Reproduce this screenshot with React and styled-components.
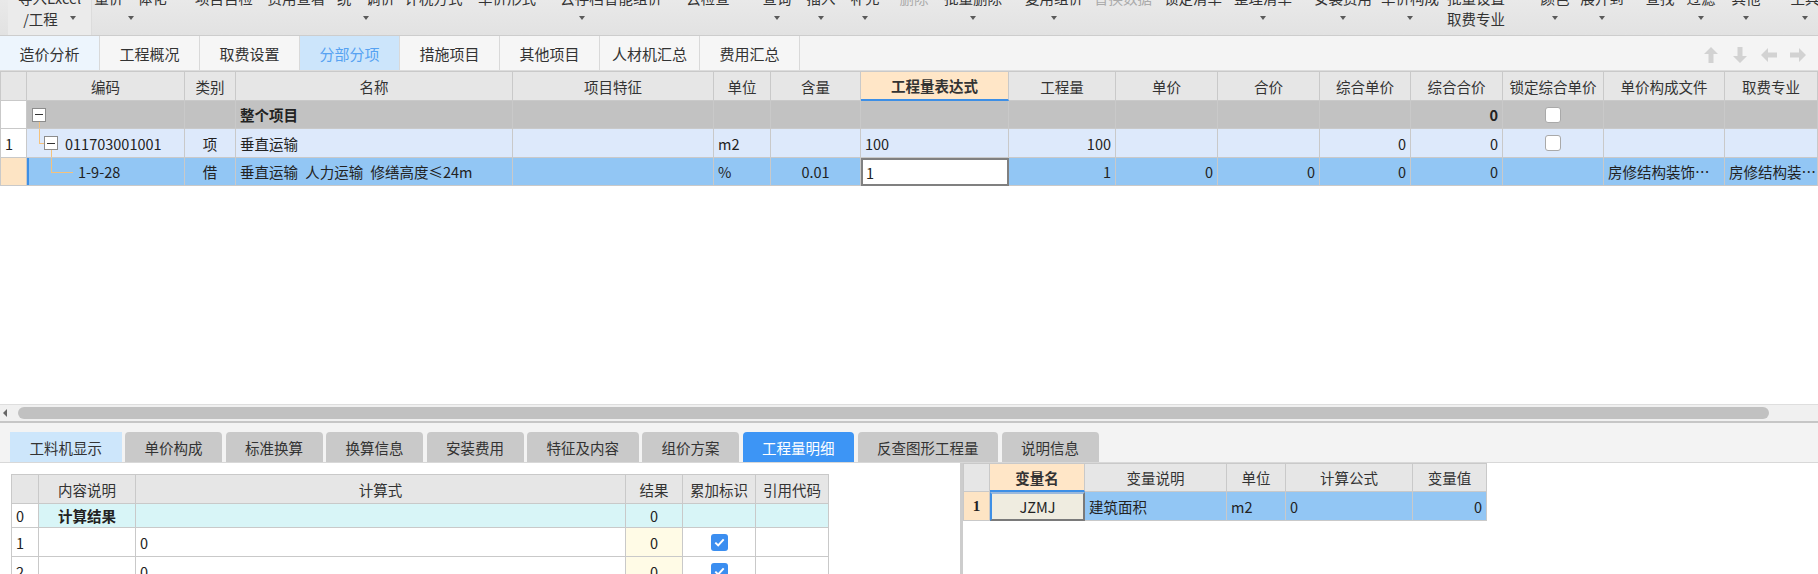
import React from "react";
import styled, { createGlobalStyle } from "styled-components";

const GlobalStyle = createGlobalStyle`
  html, body {
    margin: 0;
    padding: 0;
    background: #fff;
  }
  body {
    font-family: "Noto Sans CJK SC", "Noto Sans", sans-serif;
    color: #222;
    overflow: hidden;
  }
  * {
    box-sizing: border-box;
  }
`;

const Page = styled.div`
  width: 1818px;
  height: 574px;
  display: flex;
  flex-direction: column;
  overflow: hidden;
`;

/* ---------- toolbar ---------- */

const Toolbar = styled.div`
  flex: none;
  height: 36px;
  display: flex;
  background: linear-gradient(#e9e9e9, #e2e2e2);
  border-bottom: 1px solid #cdcdcd;
  overflow: hidden;
`;

const ToolItem = styled.div`
  flex: none;
  width: ${(p) => p.$w}px;
  margin-left: ${(p) => p.$ml}px;
  display: flex;
  flex-direction: column;
  align-items: center;
  font-size: 14.5px;
  color: ${(p) => (p.$muted ? "#ababab" : "#333")};
  background: ${(p) => (p.$boxed ? "#ebebeb" : "transparent")};
  border-right: ${(p) => (p.$boxed ? "1px solid #dcdcdc" : "none")};
`;

const ToolLabel = styled.div`
  margin-top: -11px;
  line-height: 18px;
  white-space: nowrap;
`;

const ToolSub = styled.div`
  height: 22px;
  display: flex;
  align-items: center;
  gap: 12px;
  white-space: nowrap;
`;

const Caret = styled.span`
  width: 0;
  height: 0;
  border-left: 3.5px solid transparent;
  border-right: 3.5px solid transparent;
  border-top: 4px solid #5a5a5a;
`;

/* ---------- view tabs ---------- */

const ViewTabs = styled.div`
  flex: none;
  height: 35px;
  display: flex;
  background: #f4f4f4;
  border-bottom: 1px solid #dcdcdc;
`;

const ViewTab = styled.div`
  width: 100px;
  display: flex;
  align-items: center;
  justify-content: center;
  font-size: 15px;
  border-right: 1px solid #d9d9d9;
  background: ${(p) => (p.$active ? "#cce5fb" : p.$soft ? "#edf5fd" : "#f6f6f6")};
  color: ${(p) => (p.$active ? "#56a2f2" : "#333")};
`;

const NavArrows = styled.div`
  margin-left: auto;
  display: flex;
  align-items: center;
  gap: 13px;
  padding: 4px 12px 0 0;
`;

/* ---------- main grid ---------- */

const mainCols =
  "26px 158px 51px 277px 201px 57px 90px 148px 107px 102px 102px 91px 92px 101px 121px 1fr";

const Grid = styled.div`
  flex: none;
  border-top: 1px solid #c9c9c9;
  border-left: 1px solid #c9c9c9;
`;

const GridRow = styled.div`
  display: grid;
  grid-template-columns: ${(p) => p.$cols};
  height: ${(p) => p.$h}px;
  background: ${(p) => p.$bg || "transparent"};
  font-weight: ${(p) => (p.$bold ? 700 : 400)};
`;

const Cell = styled.div`
  min-width: 0;
  display: flex;
  align-items: center;
  justify-content: ${(p) =>
    p.$align === "right" ? "flex-end" : p.$align === "center" ? "center" : "flex-start"};
  padding: 0 4px;
  font-size: 14.5px;
  white-space: pre;
  overflow: hidden;
  border-right: 1px solid #c9c9c9;
  border-bottom: 1px solid #c9c9c9;
  background: ${(p) => p.$bg || "transparent"};
  box-shadow: ${(p) => (p.$marker ? "inset 2px 0 0 #3d8fe6" : "none")};
`;

const HeadCell = styled(Cell)`
  justify-content: center;
  color: #333;
  background: ${(p) => p.$bg || "#e6e6e6"};
  font-weight: ${(p) => (p.$strong ? 700 : 400)};
  border-bottom: ${(p) => (p.$focus ? "2px solid #3d8fe6" : "1px solid #c9c9c9")};
`;

const EditCell = styled(Cell)`
  background: #fff;
  border: 2px solid #808080;
  padding-left: 3px;
`;

const TreeBox = styled.span`
  position: relative;
  flex: none;
  width: 14px;
  height: 14px;
  margin-left: ${(p) => p.$ml || 0}px;
  border: 1px solid #8c8c8c;
  background: linear-gradient(#333, #333) center / 8px 1px no-repeat, #fff;

  &::after {
    content: "";
    display: ${(p) => (p.$stub ? "block" : "none")};
    position: absolute;
    left: 6px;
    top: 13px;
    height: 8px;
    border-left: 1px solid #f5c27c;
  }
`;

const Elbow = styled.span`
  flex: none;
  align-self: flex-start;
  width: ${(p) => p.$w}px;
  height: 15px;
  margin-left: ${(p) => p.$ml}px;
  border-left: 1px solid #f5c27c;
  border-bottom: 1px solid #f5c27c;
`;

const CodeText = styled.span`
  margin-left: ${(p) => p.$ml}px;
`;

const Check = styled.span`
  width: 16px;
  height: 16px;
  border: 1px solid #a9a9a9;
  border-radius: 3px;
  background: #fff;
`;

const Filler = styled.div`
  flex: 1;
`;

/* ---------- scrollbar ---------- */

const HScroll = styled.div`
  flex: none;
  height: 19px;
  display: flex;
  align-items: center;
  background: #f0f0f0;
  border-top: 1px solid #dedede;
  border-bottom: 2px solid #c6c6c6;
`;

const ScrollArrow = styled.span`
  margin-left: 3px;
  width: 0;
  height: 0;
  border-top: 4px solid transparent;
  border-bottom: 4px solid transparent;
  border-right: 4px solid #666;
`;

const Thumb = styled.span`
  margin-left: 11px;
  width: 1751px;
  height: 12px;
  border-radius: 6px;
  background: #c1c1c1;
`;

/* ---------- detail tabs ---------- */

const DetailTabs = styled.div`
  flex: none;
  height: 40px;
  display: flex;
  align-items: flex-end;
  gap: 3.5px;
  padding-left: 10px;
  background: #f3f3f3;
  border-bottom: 1px solid #d8d8d8;
`;

const DetailTab = styled.div`
  height: 30px;
  padding: 0 19.5px;
  display: flex;
  align-items: center;
  font-size: 14.5px;
  border-radius: ${(p) => (p.$soft ? "0" : "4px 4px 0 0")};
  background: ${(p) => (p.$active ? "#3d95f5" : p.$soft ? "#cde6fb" : "#c9c9c9")};
  color: ${(p) => (p.$active ? "#fff" : "#333")};
`;

/* ---------- bottom panels ---------- */

const Bottom = styled.div`
  flex: none;
  height: 111px;
  display: flex;
  overflow: hidden;
`;

const LeftPane = styled.div`
  flex: none;
  width: 960px;
  padding: 11px 0 0 11px;
`;

const Splitter = styled.div`
  flex: none;
  width: 3px;
  background: #cdcdcd;
`;

const RightPane = styled.div`
  flex: 1;
`;

const SubTable = styled.div`
  width: ${(p) => p.$w}px;
  border-top: 1px solid #c9c9c9;
  border-left: 1px solid #c9c9c9;
`;

const BlueCheck = styled.span`
  width: 17px;
  height: 17px;
  border-radius: 3px;
  background: #3b8ef0;
  display: flex;
  align-items: center;
  justify-content: center;
`;

const VarCell = styled(Cell)`
  background: #efece0;
  border: 2px solid #7a7a7a;
  border-left-color: #3d8fe6;
  border-top-color: #9bb9dc;
`;

const SerifNum = styled(Cell)`
  font-family: "Liberation Serif", serif;
  font-weight: 700;
  font-size: 15px;
`;

/* ---------- data ---------- */

const tools = [
  { t: "导入Excel", s: 8, e: 92, sub: "/工程", caret: true, boxed: true },
  { t: "量价一体化", s: 93, e: 168, caret: true },
  { t: "项目自检", s: 195, e: 253 },
  { t: "费用查看", s: 265, e: 328 },
  { t: "统一调价", s: 336, e: 396, caret: true },
  { t: "计税方式", s: 405, e: 462 },
  { t: "单价形式", s: 477, e: 537 },
  { t: "云存档", s: 562, e: 602, caret: true },
  { t: "智能组价", s: 603, e: 663 },
  { t: "云检查", s: 686, e: 730 },
  { t: "查询", s: 762, e: 792, caret: true },
  { t: "插入", s: 806, e: 836, caret: true },
  { t: "补充", s: 850, e: 880, caret: true },
  { t: "删除", s: 899, e: 929, muted: true },
  { t: "批量删除", s: 943, e: 1003, caret: true },
  { t: "复用组价", s: 1024, e: 1084, caret: true },
  { t: "替换数据", s: 1093, e: 1153, muted: true },
  { t: "锁定清单", s: 1163, e: 1223 },
  { t: "整理清单", s: 1233, e: 1293, caret: true },
  { t: "安装费用", s: 1313, e: 1373, caret: true },
  { t: "单价构成", s: 1380, e: 1440, caret: true },
  { t: "批量设置", s: 1446, e: 1506, sub: "取费专业" },
  { t: "颜色", s: 1540, e: 1570, caret: true },
  { t: "展开到", s: 1580, e: 1624, caret: true },
  { t: "查找", s: 1645, e: 1675 },
  { t: "过滤", s: 1686, e: 1716, caret: true },
  { t: "其他", s: 1731, e: 1761, caret: true },
  { t: "工具", s: 1790, e: 1820, caret: true },
];

const viewTabs = ["造价分析", "工程概况", "取费设置", "分部分项", "措施项目", "其他项目", "人材机汇总", "费用汇总"];

const mainHead = ["", "编码", "类别", "名称", "项目特征", "单位", "含量", "工程量表达式", "工程量", "单价", "合价", "综合单价", "综合合价", "锁定综合单价", "单价构成文件", "取费专业"];

const detailTabs = ["工料机显示", "单价构成", "标准换算", "换算信息", "安装费用", "特征及内容", "组价方案", "工程量明细", "反查图形工程量", "说明信息"];

const leftCols = "27px 97px 490px 57px 73px 1fr";
const rightCols = "26px 95px 142px 59px 127px 1fr";

function BlockArrow({ dir }) {
  const rot = { up: 0, down: 180, left: 270, right: 90 }[dir];
  return (
    <svg width="16" height="18" viewBox="0 0 16 18">
      <polygon
        points="8,1 15,8 10.5,8 10.5,17 5.5,17 5.5,8 1,8"
        fill="#d2d2d2"
        transform={`rotate(${rot} 8 9)`}
      />
    </svg>
  );
}

function Tick() {
  return (
    <BlueCheck>
      <svg width="11" height="9" viewBox="0 0 11 9">
        <path d="M1.3 4.6 L4.2 7.4 L9.7 1.4" stroke="#fff" strokeWidth="2" fill="none" />
      </svg>
    </BlueCheck>
  );
}

export default function App() {
  let prev = 0;
  return (
    <Page>
      <GlobalStyle />
      <Toolbar>
        {tools.map((it) => {
          const ml = it.s - prev;
          prev = it.e;
          return (
            <ToolItem key={it.t} $w={it.e - it.s} $ml={ml} $muted={it.muted} $boxed={it.boxed}>
              <ToolLabel>{it.t}</ToolLabel>
              <ToolSub>
                {it.sub && <span>{it.sub}</span>}
                {it.caret && <Caret />}
              </ToolSub>
            </ToolItem>
          );
        })}
      </Toolbar>

      <ViewTabs>
        {viewTabs.map((t, i) => (
          <ViewTab key={t} $soft={i === 0} $active={t === "分部分项"}>
            {t}
          </ViewTab>
        ))}
        <NavArrows>
          <BlockArrow dir="up" />
          <BlockArrow dir="down" />
          <BlockArrow dir="left" />
          <BlockArrow dir="right" />
        </NavArrows>
      </ViewTabs>

      <Grid>
        <GridRow $cols={mainCols} $h={29}>
          {mainHead.map((h, i) => (
            <HeadCell key={i} $bg={h === "工程量表达式" ? "#ffe6c7" : undefined} $strong={h === "工程量表达式"} $focus={h === "工程量表达式"}>
              {h}
            </HeadCell>
          ))}
        </GridRow>

        <GridRow $cols={mainCols} $h={28} $bg="#c2c2c2" $bold>
          <Cell $bg="#fff" />
          <Cell>
            <TreeBox $ml={1} $stub />
          </Cell>
          <Cell />
          <Cell>整个项目</Cell>
          <Cell />
          <Cell />
          <Cell />
          <Cell />
          <Cell />
          <Cell />
          <Cell />
          <Cell />
          <Cell $align="right">0</Cell>
          <Cell $align="center">
            <Check />
          </Cell>
          <Cell />
          <Cell />
        </GridRow>

        <GridRow $cols={mainCols} $h={29} $bg="#dde9fb">
          <Cell $bg="#fff">1</Cell>
          <Cell style={{ paddingLeft: 0 }}>
            <Elbow $ml={12} $w={5} />
            <TreeBox $stub />
            <CodeText $ml={7}>011703001001</CodeText>
          </Cell>
          <Cell $align="center">项</Cell>
          <Cell>垂直运输</Cell>
          <Cell />
          <Cell>m2</Cell>
          <Cell />
          <Cell>100</Cell>
          <Cell $align="right">100</Cell>
          <Cell />
          <Cell />
          <Cell $align="right">0</Cell>
          <Cell $align="right">0</Cell>
          <Cell $align="center">
            <Check />
          </Cell>
          <Cell />
          <Cell />
        </GridRow>

        <GridRow $cols={mainCols} $h={28} $bg="#92c6f4">
          <Cell $bg="#fde4c4" />
          <Cell style={{ paddingLeft: 0 }} $marker>
            <Elbow $ml={24} $w={22} />
            <CodeText $ml={5}>1-9-28</CodeText>
          </Cell>
          <Cell $align="center">借</Cell>
          <Cell>{"垂直运输\u2002人力运输\u2002修缮高度≤24m"}</Cell>
          <Cell />
          <Cell>%</Cell>
          <Cell $align="center">0.01</Cell>
          <EditCell>1</EditCell>
          <Cell $align="right">1</Cell>
          <Cell $align="right">0</Cell>
          <Cell $align="right">0</Cell>
          <Cell $align="right">0</Cell>
          <Cell $align="right">0</Cell>
          <Cell />
          <Cell>房修结构装饰…</Cell>
          <Cell>房修结构装…</Cell>
        </GridRow>
      </Grid>

      <Filler />

      <HScroll>
        <ScrollArrow />
        <Thumb />
      </HScroll>

      <DetailTabs>
        {detailTabs.map((t, i) => (
          <DetailTab key={t} $soft={i === 0} $active={t === "工程量明细"}>
            {t}
          </DetailTab>
        ))}
      </DetailTabs>

      <Bottom>
        <LeftPane>
          <SubTable $w={818}>
            <GridRow $cols={leftCols} $h={29}>
              <HeadCell />
              <HeadCell>内容说明</HeadCell>
              <HeadCell>计算式</HeadCell>
              <HeadCell>结果</HeadCell>
              <HeadCell>累加标识</HeadCell>
              <HeadCell>引用代码</HeadCell>
            </GridRow>
            <GridRow $cols={leftCols} $h={24} $bg="#d8f5f7">
              <Cell $bg="#fff">0</Cell>
              <Cell $align="center" style={{ fontWeight: 700 }}>计算结果</Cell>
              <Cell />
              <Cell $align="center">0</Cell>
              <Cell />
              <Cell />
            </GridRow>
            {["1", "2"].map((n) => (
              <GridRow key={n} $cols={leftCols} $h={29}>
                <Cell>{n}</Cell>
                <Cell />
                <Cell>0</Cell>
                <Cell $align="center" $bg="#fffbe6">0</Cell>
                <Cell $align="center">
                  <Tick />
                </Cell>
                <Cell />
              </GridRow>
            ))}
          </SubTable>
        </LeftPane>
        <Splitter />
        <RightPane>
          <SubTable $w={524}>
            <GridRow $cols={rightCols} $h={28}>
              <HeadCell />
              <HeadCell $bg="#ffe6c7" $strong $focus>变量名</HeadCell>
              <HeadCell>变量说明</HeadCell>
              <HeadCell>单位</HeadCell>
              <HeadCell>计算公式</HeadCell>
              <HeadCell>变量值</HeadCell>
            </GridRow>
            <GridRow $cols={rightCols} $h={29} $bg="#92c6f4">
              <SerifNum $align="center" $bg="#fde4c4">1</SerifNum>
              <VarCell $align="center">JZMJ</VarCell>
              <Cell>建筑面积</Cell>
              <Cell>m2</Cell>
              <Cell>0</Cell>
              <Cell $align="right">0</Cell>
            </GridRow>
          </SubTable>
        </RightPane>
      </Bottom>
    </Page>
  );
}
